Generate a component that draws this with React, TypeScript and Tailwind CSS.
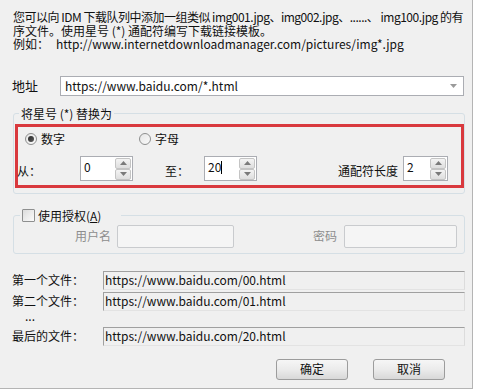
import type { ReactNode } from "react";

const inputBorder = "border border-[#abadb3]";

const SpinButtons = () => (
  <div className="flex flex-col mt-[1px] mr-[1px] w-[16px] h-[22px]">
    {["up", "down"].map((dir) => (
      <div
        key={dir}
        className="flex-1 flex items-center justify-center border border-[#c4c4c4] rounded-[2px] bg-gradient-to-b from-[#f4f4f4] to-[#dedede]"
      >
        <svg width="7" height="4" viewBox="0 0 7 4">
          {dir === "up" ? (
            <path d="M0 4 L3.5 0 L7 4 Z" fill="#7a7a7a" />
          ) : (
            <path d="M0 0 L3.5 4 L7 0 Z" fill="#7a7a7a" />
          )}
        </svg>
      </div>
    ))}
  </div>
);

const SpinBox = ({ value, width, caret = false }: { value: string; width: string; caret?: boolean }) => (
  <div className={`${width} h-[25px] bg-white ${inputBorder} flex justify-between`}>
    <div className="pl-[3px] pt-[3px] leading-[14px] flex items-start">
      <span>{value}</span>
      {caret && <span className="w-[1px] h-[13px] bg-black mt-[1px]" />}
    </div>
    <SpinButtons />
  </div>
);

const Radio = ({ checked, label }: { checked?: boolean; label: string }) => (
  <div className="flex items-center gap-[4px]">
    <div className="w-[12px] h-[12px] rounded-full border border-[#8e8f8f] bg-gradient-to-br from-[#e6e6e6] to-[#fafafa] flex items-center justify-center">
      {checked && <div className="w-[6px] h-[6px] rounded-full bg-gradient-to-br from-[#2a2a2a] to-[#5a5a5a]" />}
    </div>
    <span>{label}</span>
  </div>
);

const FileRow = ({ label, value }: { label: string; value: string }) => (
  <div className="flex items-center h-[19px]">
    <span className="w-[91px]">{label}</span>
    <div className="w-[362px] h-[19px] border-t border-l border-[#a0a0a0] border-b-[#e3e3e3] border-r-[#dcdcdc] border-b border-r bg-[#f0f0f0] pl-[1px] flex items-center leading-[14px]">
      {value}
    </div>
  </div>
);

const Button = ({ children }: { children: ReactNode }) => (
  <button className="w-[72px] h-[21px] border border-[#9c9c9c] rounded-[3px] bg-gradient-to-b from-[#f6f6f6] via-[#ebebeb] to-[#d8d8d8] leading-[14px] text-[12px]">
    {children}
  </button>
);

export default function App() {
  return (
    <div className="min-h-screen bg-white font-['Noto_Sans_CJK_SC',sans-serif] text-[12px] text-[#111]">
      <div className="w-[473px] h-[389px] bg-[#f0f0f0] border-r border-b border-[#b4b4b4] flex flex-col">
        {/* intro text */}
        <div className="pl-[13px] pt-[10px] leading-[13.5px] whitespace-nowrap">
          <div className="tracking-[-0.5px]">
            您可以向 IDM 下载队列中添加一组类似 img001.jpg、img002.jpg、......、 img100.jpg 的有
          </div>
          <div>序文件。使用星号 (*) 通配符编写下载链接模板。</div>
          <div className="flex">
            <span className="w-[43px]">例如：</span>
            <span>http://www.internetdownloadmanager.com/pictures/img*.jpg</span>
          </div>
        </div>

        {/* address */}
        <div className="mt-[25px] pl-[12px] flex items-center h-[20px]">
          <span className="w-[48px] text-[13px]">地址</span>
          <div className={`w-[404px] h-[20px] bg-white ${inputBorder} flex items-center justify-between pl-[4px] pr-[6px] leading-[14px]`}>
            <span>https://www.baidu.com/*.html</span>
            <svg width="7" height="4" viewBox="0 0 7 4">
              <path d="M0 0 L3.5 4 L7 0 Z" fill="#9a9a9a" />
            </svg>
          </div>
        </div>

        {/* replace group */}
        <fieldset className="mt-[11px] ml-[13px] w-[452px] border border-[#d5dfe5] rounded-[3px] pb-[5px]">
          <legend className="ml-[5px] px-[2px] leading-[14px]">将星号 (*) 替换为</legend>
          <div className="mt-[3px] ml-[1px] w-[449px] h-[64px] border-[3px] border-[#d9393e] flex flex-col">
            <div className="mt-[2px] h-[20px] flex items-center pl-[7px]">
              <div className="w-[114px]">
                <Radio checked label="数字" />
              </div>
              <Radio label="字母" />
            </div>
            <div className="mt-[7px] h-[25px] flex items-start">
              <span className="w-[63px] mt-[6px] -ml-[1px]">从：</span>
              <SpinBox value="0" width="w-[53px]" />
              <span className="ml-[32px] w-[39px] mt-[6px]">至：</span>
              <SpinBox value="20" width="w-[53px]" caret />
              <span className="ml-[81px] w-[65px] mt-[6px]">通配符长度</span>
              <SpinBox value="2" width="w-[45px]" />
            </div>
          </div>
        </fieldset>

        {/* auth group */}
        <fieldset className="mt-[15px] ml-[13px] w-[452px] border border-[#d5dfe5] rounded-[3px] pb-[5px]">
          <legend className="ml-[6px] w-[101px] pl-[2px] h-[14px] flex items-center gap-[3px]">
            <span className="w-[13px] h-[13px] border border-[#8e8f8f] bg-gradient-to-br from-[#dcdcdc] to-[#fbfbfb] rounded-[1px]" />
            <span className="leading-[14px]">
              使用授权(<span className="underline">A</span>)
            </span>
          </legend>
          <div className="mt-[2px] h-[23px] flex items-center text-[#8d8d8d]">
            <span className="ml-[61px] w-[42px]">用户名</span>
            <div className="w-[117px] h-[23px] bg-[#f5f5f5] border border-[#c9cbce] rounded-[2px]" />
            <span className="ml-[79px] w-[31px]">密码</span>
            <div className="w-[113px] h-[23px] bg-[#f5f5f5] border border-[#c9cbce] rounded-[2px]" />
          </div>
        </fieldset>

        {/* preview */}
        <div className="mt-[17px] pl-[12px] flex flex-col">
          <FileRow label="第一个文件：" value="https://www.baidu.com/00.html" />
          <div className="mt-[2px]">
            <FileRow label="第二个文件：" value="https://www.baidu.com/01.html" />
          </div>
          <div className="h-[14px] pl-[13px] leading-[10px]">...</div>
          <div className="mt-[2px]">
            <FileRow label="最后的文件：" value="https://www.baidu.com/20.html" />
          </div>
        </div>

        {/* buttons */}
        <div className="mt-[13px] pl-[276px] flex gap-[25px]">
          <Button>确定</Button>
          <Button>取消</Button>
        </div>
      </div>
    </div>
  );
}
